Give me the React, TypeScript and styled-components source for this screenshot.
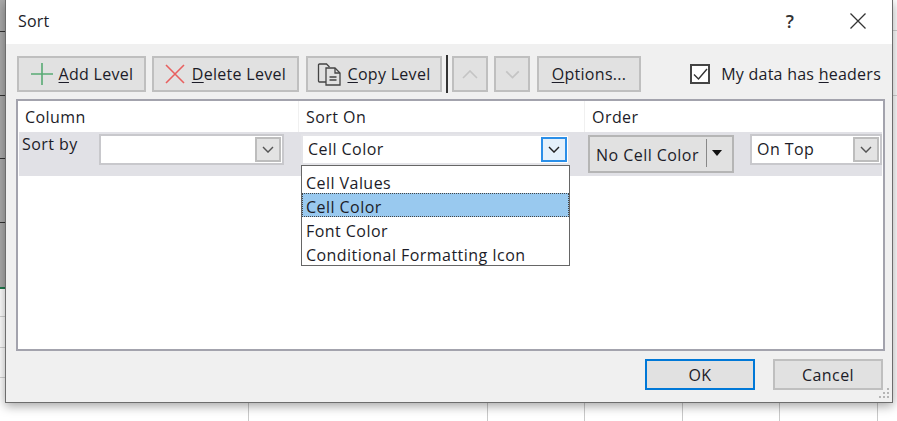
import React from "react";
import styled, { createGlobalStyle } from "styled-components";

const uiFont = `font-family: "Open Sans", "Noto Sans", sans-serif; font-size: 16px; font-weight: 500; letter-spacing: .45px; color: #1c1c28;`;

const Global = createGlobalStyle`
  html, body { margin: 0; padding: 0; background: #fff; }
  body { font-family: "Open Sans", "Noto Sans", sans-serif; color: #1c1c28; }
`;
const Page = styled.div`
  width: 897px; height: 421px; overflow: hidden; position: relative;
  padding: 0 4px 0 5px; box-sizing: border-box;
  background:
    linear-gradient(#c9c9c9, #c9c9c9) 248px 403px / 1px 18px no-repeat,
    linear-gradient(#c9c9c9, #c9c9c9) 487px 403px / 1px 18px no-repeat,
    linear-gradient(#c9c9c9, #c9c9c9) 584px 403px / 1px 18px no-repeat,
    linear-gradient(#c9c9c9, #c9c9c9) 682px 403px / 1px 18px no-repeat,
    linear-gradient(#c9c9c9, #c9c9c9) 779px 403px / 1px 18px no-repeat,
    linear-gradient(#c9c9c9, #c9c9c9) 877px 403px / 1px 18px no-repeat,
    linear-gradient(#333, #333) 0 31px / 5px 1px no-repeat,
    linear-gradient(#333, #333) 0 95px / 5px 1px no-repeat,
    linear-gradient(#333, #333) 0 158px / 5px 1px no-repeat,
    linear-gradient(#333, #333) 0 222px / 5px 1px no-repeat,
    linear-gradient(#1f7a4d, #1f7a4d) 0 287px / 5px 2px no-repeat,
    linear-gradient(#ababab, #ababab) 0 0 / 5px 287px no-repeat,
    linear-gradient(#d4d4d4, #d4d4d4) 0 316px / 5px 1px no-repeat,
    linear-gradient(#d4d4d4, #d4d4d4) 0 347px / 5px 1px no-repeat,
    linear-gradient(#d4d4d4, #d4d4d4) 0 377px / 5px 1px no-repeat,
    linear-gradient(#d4d4d4, #d4d4d4) 893px 30px / 4px 1px no-repeat,
    linear-gradient(#d4d4d4, #d4d4d4) 893px 95px / 4px 1px no-repeat,
    #fff;
`;
const Dialog = styled.div`
  width: 888px; height: 403px; box-sizing: border-box; position: relative;
  border: solid #6d6d6d; border-width: 0 1px 1px 1px;
  background: #f0f0f0; display: flex; flex-direction: column;
  box-shadow: 0 3px 10px rgba(0,0,0,.36);
`;
const TitleBar = styled.div`
  height: 44px; flex: none; box-sizing: border-box; background: #fff; display: flex; align-items: center;
  padding: 0 26px 3px 12px;
`;
const Title = styled.div`flex: 1; ${uiFont} font-size: 16px; font-weight: 400; letter-spacing: .2px;`;
const HelpMark = styled.span`
  font-size: 18px; font-weight: 600; color: #333; margin-right: 56px; line-height: 1;
`;
const Content = styled.div`
  flex: 1; display: flex; flex-direction: column; padding: 12px 8px 0 10px; min-height: 0;
`;
const Toolbar = styled.div`
  display: flex; align-items: center; height: 36px; padding-left: 1px; flex: none;
`;
const ToolButton = styled.button<{ $w: number; $gap?: number; $iconGap?: number }>`
  width: ${p => p.$w}px; height: 36px; margin-right: ${p => p.$gap ?? 6}px; box-sizing: border-box;
  border: 2px solid #bfbfbf; background: #e1e1e1; padding: 0;
  display: flex; align-items: center; justify-content: center; gap: ${p => p.$iconGap ?? 5}px;
  ${uiFont} letter-spacing: .3px; white-space: nowrap;
  u { text-underline-offset: 2px; }
`;
const Divider = styled.div`
  width: 2px; height: 38px; background: #333; margin: 0 4px 0 -2px; flex: none;
`;
const HeaderCheck = styled.label`
  margin-left: auto; margin-right: 3px; display: flex; align-items: center; gap: 11px;
  ${uiFont} letter-spacing: .25px; white-space: nowrap;
  u { text-underline-offset: 2px; }
`;
const CheckBox = styled.span`
  width: 20px; height: 20px; box-sizing: border-box; border: 2px solid #444; background: #fff;
  display: flex; align-items: center; justify-content: center; flex: none;
`;
const ListPanel = styled.div`
  margin-top: 7px; height: 252px; width: 869px; box-sizing: border-box; flex: none; position: relative;
  border: 2px solid #a3a3ad; background: #fff; display: flex; flex-direction: column;
`;
const HeaderRow = styled.div`
  height: 31px; display: grid; grid-template-columns: 281px 286px 1fr; flex: none;
`;
const HeaderCell = styled.div`
  ${uiFont} line-height: 33px; padding-left: 7px;
  border-right: 1px solid #f0f0f0;
  &:last-child { border-right: 0; }
`;
const LevelRow = styled.div`
  height: 44px; margin: 0 1px; background: #e1e1e6; display: flex; align-items: flex-start; flex: none;
`;
const SortBy = styled.div`
  width: 80px; padding: 1px 0 0 3px; box-sizing: border-box; ${uiFont}
`;
const Combo = styled.div<{ $w: number; $ml: number; $focus?: boolean }>`
  width: ${p => p.$w}px; margin: 2px 0 0 ${p => p.$ml}px; height: 31px; box-sizing: border-box;
  background: #fff; display: flex; align-items: center; justify-content: space-between;
  padding: 0 1px 0 5px; border: 2px solid ${p => (p.$focus ? "#e4e4e8" : "#c8c8cc")};
  ${uiFont} line-height: 1;
`;
const ComboText = styled.span`margin-top: -1px;`;
const ComboArrow = styled.span<{ $active?: boolean }>`
  width: 26px; height: 25px; box-sizing: border-box; flex: none;
  border: 2px solid ${p => (p.$active ? "#2b8fe8" : "#bdbdbd")};
  background: ${p => (p.$active ? "#e5f1fb" : "#e3e3e3")};
  display: flex; align-items: center; justify-content: center;
`;
const ColorButton = styled.div`
  width: 146px; height: 38px; margin: 3px 0 0 18px; box-sizing: border-box; flex: none;
  background: #e1e1e1; border: 2px solid #b5b5b5; display: flex; align-items: center;
  padding: 1px 0 0 6px; ${uiFont} white-space: nowrap;
`;
const ColorSep = styled.span`width: 1px; height: 28px; background: #888; margin: -3px 5px 0 7px; flex: none;`;
const Caret = styled.span`
  width: 0; height: 0; border: 5.5px solid transparent; border-top: 6px solid #111; border-bottom: 0;
  margin-top: -4px; flex: none;
`;
const Menu = styled.div`
  position: absolute; left: 283px; top: 64px; width: 269px; height: 101px; box-sizing: border-box;
  border: 1.5px solid #666; background: #fff; padding-top: 2.5px;
`;
const MenuItem = styled.div<{ $on?: boolean }>`
  height: 24.3px; line-height: 28px; padding-left: 4px; box-sizing: border-box; ${uiFont} white-space: nowrap;
  ${p => p.$on ? "background: #99c9ef; outline: 1px dotted #444; outline-offset: -1px;" : ""}
`;
const Footer = styled.div`
  display: flex; justify-content: flex-end; gap: 18px; margin-top: 8px; padding-right: 1px;
`;
const FootButton = styled.button<{ $primary?: boolean }>`
  width: 110px; height: 31px; box-sizing: border-box; padding: 0;
  background: #e1e1e1; border: 2px solid ${p => (p.$primary ? "#0078d7" : "#bfbfbf")};
  ${uiFont}
`;
const Grip = styled.svg`position: absolute; right: 1px; bottom: 2px;`;

const Chevron = ({ color = "#555", size = 12 }: { color?: string; size?: number }) => (
  <svg width={size} height={size * 0.6} viewBox="0 0 12 7" fill="none">
    <path d="M1 1l5 5 5-5" stroke={color} strokeWidth="1.4" />
  </svg>
);

export default function App() {
  return (
    <Page>
      <Global />
      <Dialog>
        <TitleBar>
          <Title>Sort</Title>
          <HelpMark>?</HelpMark>
          <svg width="16" height="16" viewBox="0 0 16 16" fill="none">
            <path d="M.5.5l15 15M15.5.5l-15 15" stroke="#333" strokeWidth="1.3" />
          </svg>
        </TitleBar>
        <Content>
          <Toolbar>
            <ToolButton $w={129}>
              <svg width="24" height="24" viewBox="0 0 24 24" fill="none">
                <path d="M12 1v22M1 12h22" stroke="#58ab74" strokeWidth="1.6" />
              </svg>
              <span><u>A</u>dd Level</span>
            </ToolButton>
            <ToolButton $w={147} $gap={7} $iconGap={7}>
              <svg width="20" height="20" viewBox="0 0 20 20" fill="none">
                <path d="M1 1l18 18M19 1L1 19" stroke="#e8605f" strokeWidth="1.6" />
              </svg>
              <span><u>D</u>elete Level</span>
            </ToolButton>
            <ToolButton $w={136} $gap={6}>
              <svg width="25" height="24" viewBox="0 0 25 24" fill="none" stroke="#444" strokeWidth="1.3">
                <path d="M9 20H2.5a1 1 0 0 1-1-1V3a1 1 0 0 1 1-1h7l3 3" />
                <path d="M9 6h9l5 5v12H9z" fill="#e1e1e1" />
                <path d="M18 6v5h5M12.5 15h7M12.5 18h7" />
              </svg>
              <span><u>C</u>opy Level</span>
            </ToolButton>
            <Divider />
            <ToolButton $w={36} disabled>
              <svg width="16" height="9" viewBox="0 0 16 9" fill="none"><path d="M1 8l7-7 7 7" stroke="#c4c4c4" strokeWidth="1.6" /></svg>
            </ToolButton>
            <ToolButton $w={36} $gap={7} disabled>
              <Chevron color="#c4c4c4" size={15} />
            </ToolButton>
            <ToolButton $w={104}><span><u>O</u>ptions...</span></ToolButton>
            <HeaderCheck>
              <CheckBox>
                <svg width="15" height="13" viewBox="0 0 15 13" fill="none"><path d="M1 6.5l4.5 4.5L14 1" stroke="#333" strokeWidth="1.4" /></svg>
              </CheckBox>
              <span>My data has <u>h</u>eaders</span>
            </HeaderCheck>
          </Toolbar>
          <ListPanel>
            <HeaderRow>
              <HeaderCell>Column</HeaderCell>
              <HeaderCell>Sort On</HeaderCell>
              <HeaderCell>Order</HeaderCell>
            </HeaderRow>
            <LevelRow>
              <SortBy>Sort by</SortBy>
              <Combo $w={185} $ml={0}>
                <span />
                <ComboArrow><Chevron /></ComboArrow>
              </Combo>
              <Combo $w={269} $ml={17} $focus>
                <ComboText>Cell Color</ComboText>
                <ComboArrow $active><Chevron color="#222" /></ComboArrow>
              </Combo>
              <ColorButton>
                <span>No Cell Color</span>
                <ColorSep />
                <Caret />
              </ColorButton>
              <Combo $w={132} $ml={16}>
                <ComboText>On Top</ComboText>
                <ComboArrow><Chevron /></ComboArrow>
              </Combo>
            </LevelRow>
            <Menu>
              <MenuItem>Cell Values</MenuItem>
              <MenuItem $on>Cell Color</MenuItem>
              <MenuItem>Font Color</MenuItem>
              <MenuItem>Conditional Formatting Icon</MenuItem>
            </Menu>
          </ListPanel>
          <Footer>
            <FootButton $primary>OK</FootButton>
            <FootButton>Cancel</FootButton>
          </Footer>
        </Content>
        <Grip width="13" height="12" viewBox="0 0 13 12" fill="#b5b5b5">
          <rect x="9" y="0" width="2" height="2" />
          <rect x="5" y="4" width="2" height="2" />
          <rect x="9" y="4" width="2" height="2" />
          <rect x="1" y="8" width="2" height="2" />
          <rect x="5" y="8" width="2" height="2" />
          <rect x="9" y="8" width="2" height="2" />
        </Grip>
      </Dialog>
    </Page>
  );
}
